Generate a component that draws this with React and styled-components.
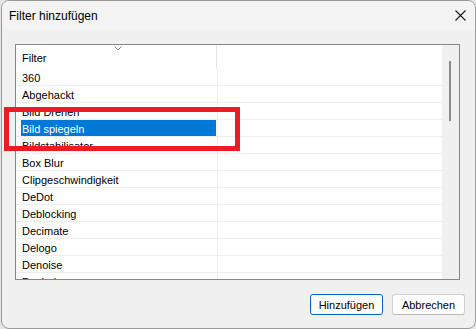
import React from 'react';
import styled, { createGlobalStyle } from 'styled-components';

const GlobalStyle = createGlobalStyle`
  html, body {
    margin: 0;
    padding: 0;
    background: #e4e4e4;
  }
  * {
    box-sizing: border-box;
  }
`;

const Window = styled.div`
  width: 475px;
  height: 329px;
  margin-left: 1px;
  border: 1px solid #9a9a9a;
  border-radius: 8px;
  background: #f0f0f0;
  display: flex;
  flex-direction: column;
  overflow: hidden;
  position: relative;
  font-family: 'Liberation Sans', Arial, sans-serif;
  color: #000;
`;

const TitleBar = styled.div`
  height: 30px;
  background: #f3f3f3;
  display: flex;
  align-items: center;
  justify-content: space-between;
  padding: 0 9px 0 7px;
  font-size: 12px;
`;

const CloseButton = styled.div`
  width: 12px;
  height: 12px;
  display: flex;
  align-items: center;
  justify-content: center;
`;

const Body = styled.div`
  flex: 1;
  display: flex;
  flex-direction: column;
  padding: 14px 15px 13px 13px;
`;

const ListBox = styled.div`
  height: 236px;
  border: 1px solid #828790;
  background: #fff;
  display: flex;
  overflow: hidden;
`;

const Grid = styled.div`
  flex: 1;
  display: flex;
  flex-direction: column;
  overflow: hidden;
  font-size: 11px;
`;

const HeaderRow = styled.div`
  height: 24px;
  display: flex;
  flex-shrink: 0;
`;

const HeaderCell = styled.div`
  width: 201px;
  border-right: 1px solid #e5e5e5;
  display: flex;
  align-items: center;
  padding-left: 6px;
  padding-top: 2px;
  position: relative;
`;

const SortArrow = styled.svg`
  position: absolute;
  top: 1px;
  left: 98px;
`;

const Row = styled.div`
  height: 17px;
  display: flex;
  flex-shrink: 0;
  border-bottom: 1px solid #ededed;
`;

const NameCell = styled.div`
  width: 202px;
  border-right: 1px solid #f0f0f0;
  padding: 0 1px 0 5px;
  display: flex;
`;

const NameText = styled.span`
  flex: 1;
  display: flex;
  align-items: center;
  padding: 2px 0 0 1px;
  background: ${(p) => (p.$selected ? '#0078d7' : 'transparent')};
  color: ${(p) => (p.$selected ? '#fff' : '#000')};
  white-space: nowrap;
`;

const ScrollBar = styled.div`
  width: 17px;
  background: #f0f0f0;
  flex-shrink: 0;
  padding: 16px 0 0 7px;
`;

const Thumb = styled.div`
  width: 2px;
  height: 60px;
  background: #8b8b8b;
`;

const ButtonRow = styled.div`
  margin-top: 14px;
  display: flex;
  justify-content: flex-end;
  gap: 9px;
  margin-right: -5px;
`;

const Button = styled.button`
  width: 73px;
  height: 21px;
  font-family: 'Liberation Sans', Arial, sans-serif;
  font-size: 11px;
  color: #000;
  background: #fdfdfd;
  border: 1px solid ${(p) => (p.$primary ? '#0067c0' : '#d0d0d0')};
  border-bottom-color: ${(p) => (p.$primary ? '#0067c0' : '#b8b8b8')};
  border-radius: 3px;
  padding: 0;
`;

const Marker = styled.div`
  position: absolute;
  left: 2px;
  top: 106px;
  width: 236px;
  height: 44px;
  border: 5px solid #ed1c24;
  pointer-events: none;
`;

const filters = [
  '360',
  'Abgehackt',
  'Bild Drehen',
  'Bild spiegeln',
  'Bildstabilisator',
  'Box Blur',
  'Clipgeschwindigkeit',
  'DeDot',
  'Deblocking',
  'Decimate',
  'Delogo',
  'Denoise',
  'Deshake',
];

const App = () => {
  const selected = 'Bild spiegeln';

  return (
    <>
      <GlobalStyle />
      <Window>
        <TitleBar>
          <span>Filter hinzufügen</span>
          <CloseButton>
            <svg width="11" height="11" viewBox="0 0 11 11">
              <path d="M0.5 0.5 L10.5 10.5 M10.5 0.5 L0.5 10.5" stroke="#1a1a1a" strokeWidth="1.1" />
            </svg>
          </CloseButton>
        </TitleBar>
        <Body>
          <ListBox>
            <Grid>
              <HeaderRow>
                <HeaderCell>
                  Filter
                  <SortArrow width="8" height="5" viewBox="0 0 8 5">
                    <path d="M0.5 0.5 L4 4 L7.5 0.5" stroke="#8a8a8a" fill="none" strokeWidth="1" />
                  </SortArrow>
                </HeaderCell>
              </HeaderRow>
              {filters.map((name) => (
                <Row key={name}>
                  <NameCell>
                    <NameText $selected={name === selected}>{name}</NameText>
                  </NameCell>
                </Row>
              ))}
            </Grid>
            <ScrollBar>
              <Thumb />
            </ScrollBar>
          </ListBox>
          <ButtonRow>
            <Button $primary>Hinzufügen</Button>
            <Button>Abbrechen</Button>
          </ButtonRow>
        </Body>
        <Marker />
      </Window>
    </>
  );
};

export default App;
